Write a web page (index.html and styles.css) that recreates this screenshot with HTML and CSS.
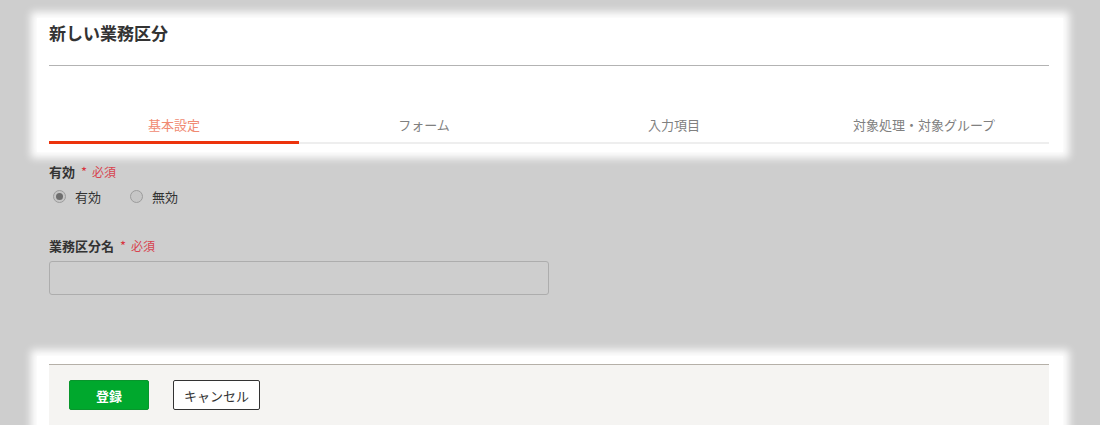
FILE: index.html
```html
<!DOCTYPE html>
<html lang="ja">
<head>
  <meta charset="UTF-8" />
  <title>新しい業務区分</title>
  <link rel="stylesheet" href="styles.css">
</head>
<body>

  <div class="head">
    <h1 class="title">新しい業務区分</h1>
    <ul class="tabs">
      <li class="tab active">基本設定</li>
      <li class="tab">フォーム</li>
      <li class="tab">入力項目</li>
      <li class="tab">対象処理・対象グループ</li>
    </ul>
  </div>

  <div class="form">
    <div class="label">有効<span class="req">*</span><span class="req-text">必須</span></div>
    <div class="radios">
      <label class="radio"><span class="dot checked"></span>有効</label>
      <label class="radio"><span class="dot"></span>無効</label>
    </div>

    <div class="label second">業務区分名<span class="req">*</span><span class="req-text">必須</span></div>
    <input class="text-input" type="text">
  </div>

  <div class="foot">
    <div class="foot-inner">
      <button class="btn btn-save">登録</button>
      <button class="btn btn-cancel">キャンセル</button>
    </div>
  </div>

</body>
</html>
```

FILE: styles.css
```css
body {
  margin: 0;
  background-color: #cecece;
  color: #333;
  font-family: "Noto Sans CJK JP", "Noto Sans", sans-serif;
  height: 425px;
  overflow: hidden;
}

/* ヘッダー */
.head {
  margin: 18px 37px 0;
  padding: 6px 14px 8px 12px;
  background: #fff;
  box-shadow: 0 0 8px 6px #fff;
}

.title {
  margin: 0;
  padding-bottom: 23px;
  font-size: 17px;
  line-height: 18px;
  font-weight: bold;
  color: #333;
  border-bottom: 1px solid #b3b3b3;
}

.tabs {
  list-style: none;
  margin: 49px 0 0;
  padding: 0;
  display: flex;
}

.tab {
  flex: 1;
  text-align: center;
  font-size: 13px;
  line-height: 20px;
  color: #808080;
  padding-bottom: 7px;
  border-bottom: 2px solid #eee;
}

.tab.active {
  color: #f08a72;
  border-bottom-color: #ec330c;
  box-shadow: 0 -1px 0 #ec330c inset;
}

/* フォーム */
.form {
  margin: 11px 49px 0;
}

.label {
  font-size: 13px;
  line-height: 18px;
  font-weight: bold;
  color: #333;
}

.label.second {
  margin-top: 30px;
}

.req {
  margin-left: 6px;
  color: #d8343f;
  font-weight: normal;
}

.req-text {
  margin-left: 5px;
  color: #d8434e;
  font-weight: normal;
  font-size: 12px;
}

.radios {
  display: flex;
  gap: 29px;
  margin-top: 6px;
  padding-left: 4px;
}

.radio {
  display: flex;
  align-items: center;
  gap: 9px;
  font-size: 13px;
  line-height: 20px;
  color: #333;
}

.dot {
  width: 11px;
  height: 11px;
  border: 1px solid #9c9c9c;
  border-radius: 50%;
  background: #c6c6c6;
  position: relative;
  top: -1px;
}

.dot.checked::after {
  content: "";
  position: absolute;
  left: 2px;
  top: 2px;
  width: 7px;
  height: 7px;
  border-radius: 50%;
  background: #6e6e6e;
}

.text-input {
  display: block;
  margin-top: 6px;
  width: 500px;
  height: 34px;
  box-sizing: border-box;
  border: 1px solid #adadad;
  border-radius: 3px;
  background: transparent;
}

/* フッター */
.foot {
  margin: 61px 37px 0;
  padding: 8px 14px 0 12px;
  background: #fff;
  box-shadow: 0 0 8px 6px #fff;
}

.foot-inner {
  background: #f5f4f2;
  border-top: 1px solid #b5b0a8;
  padding: 15px 20px 20px;
  display: flex;
  gap: 24px;
}

.btn {
  height: 30px;
  font-family: "Noto Sans CJK JP", sans-serif;
  font-size: 13px;
  border-radius: 2px;
  cursor: pointer;
}

.btn-save {
  width: 80px;
  background: #00a82d;
  border: 1px solid #08962c;
  color: #fff;
  font-weight: bold;
}

.btn-cancel {
  width: 87px;
  background: #fff;
  border: 1px solid #333;
  color: #333;
}
```
